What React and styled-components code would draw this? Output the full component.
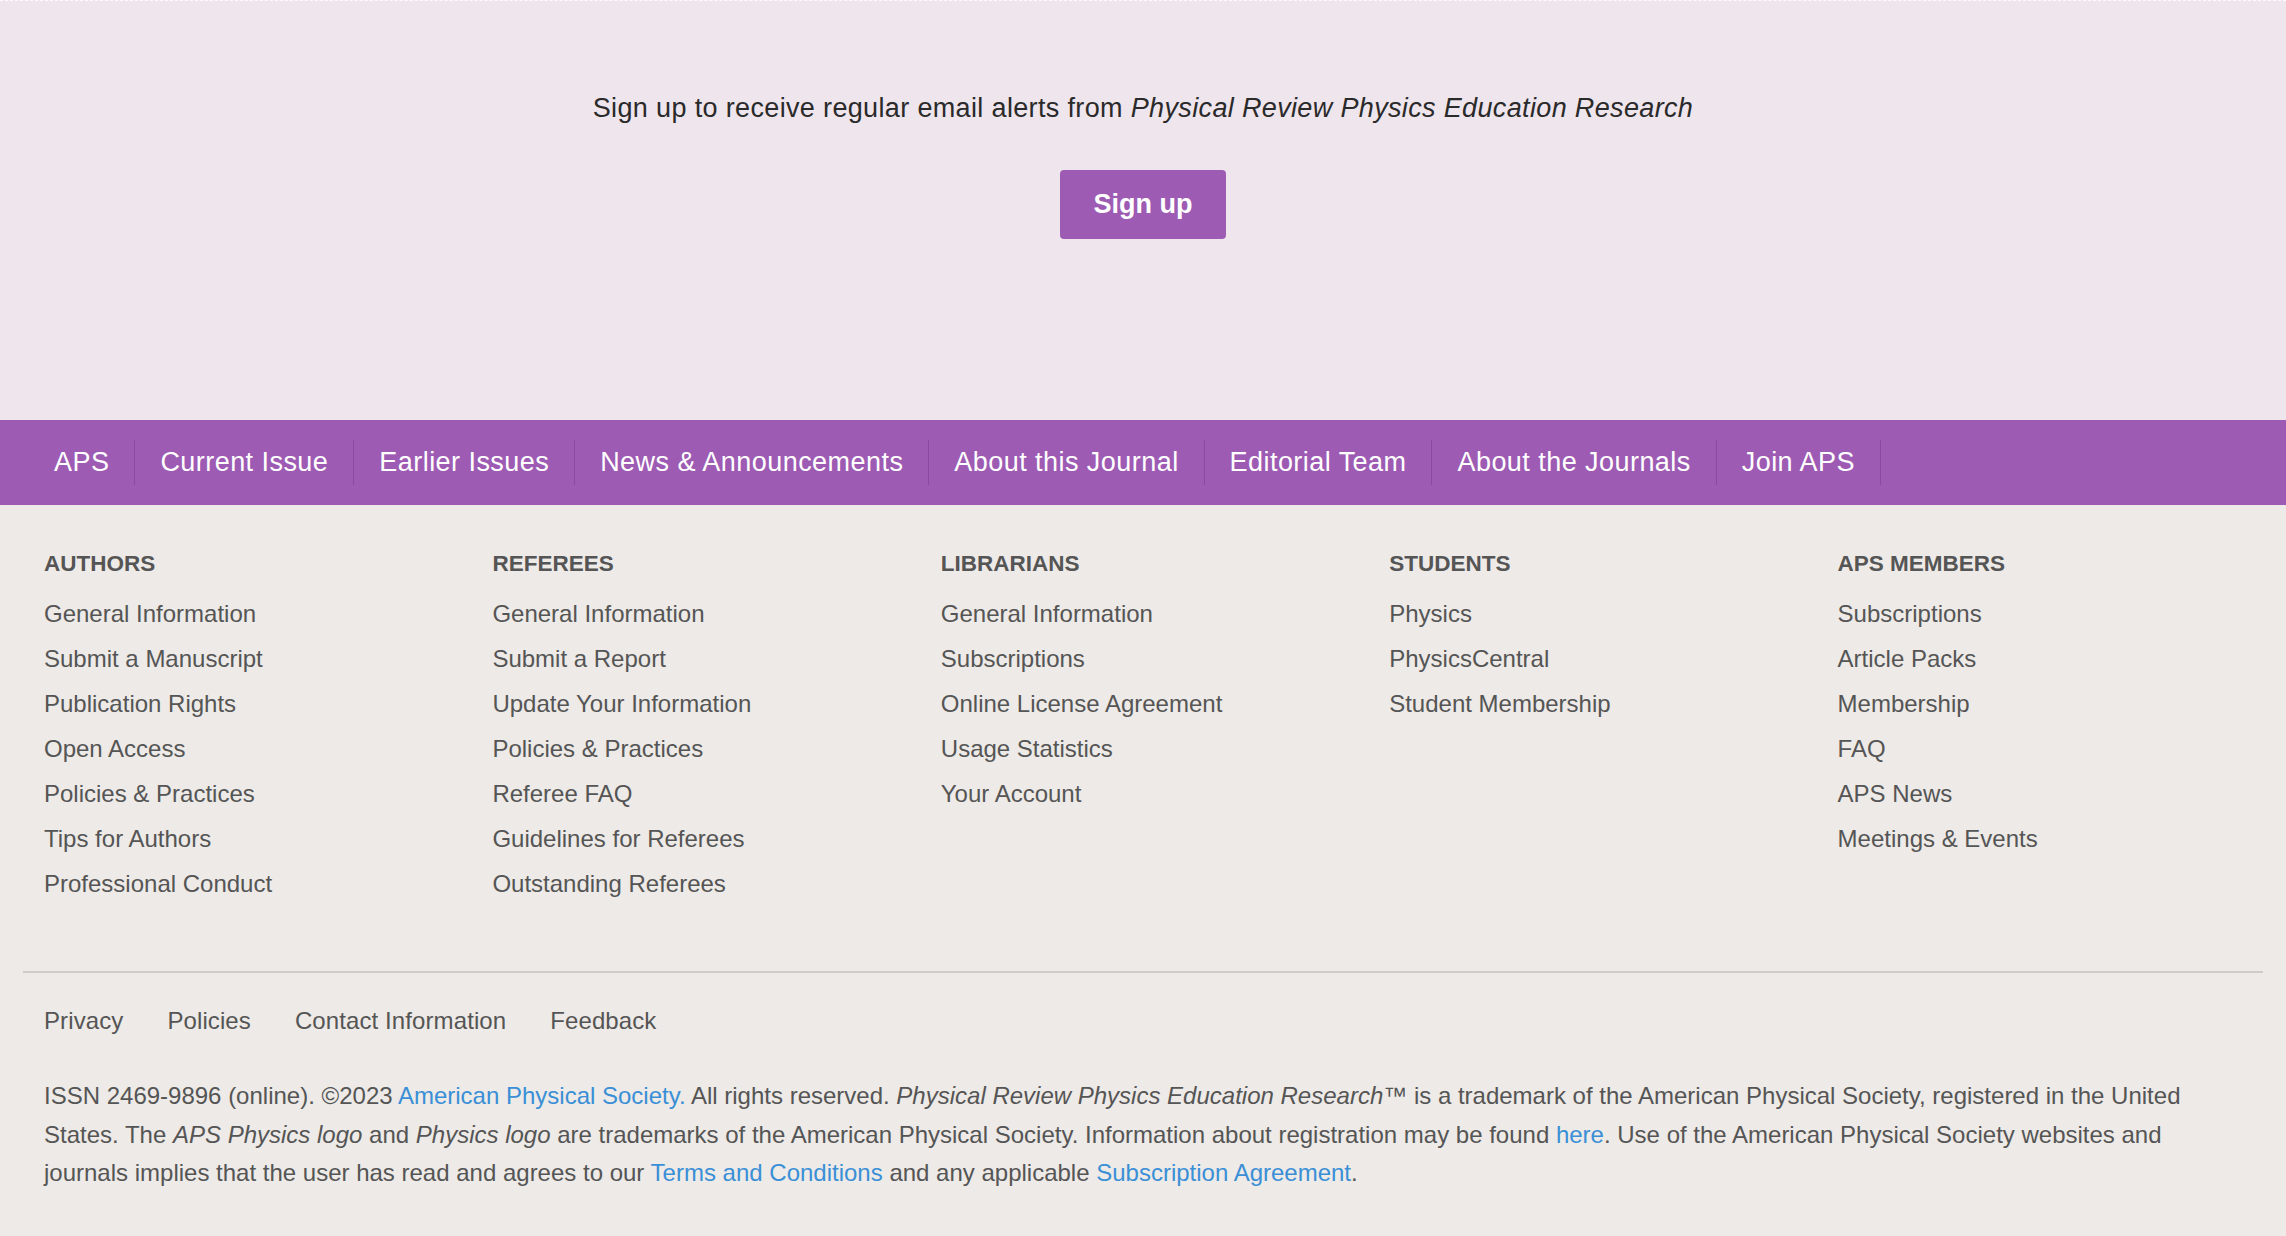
import React from "react";
import styled, { createGlobalStyle } from "styled-components";

const GlobalStyle = createGlobalStyle`
  html, body {
    margin: 0;
    padding: 0;
    background: #edeae7;
  }
  body {
    font-family: "Liberation Sans", Arial, Helvetica, sans-serif;
    -webkit-font-smoothing: antialiased;
  }
  a {
    text-decoration: none;
  }
`;

const colors = {
  alertBg: "#efe5ed",
  purple: "#9d5bb3",
  purpleDark: "#8a4a9f",
  footerBg: "#edeae7",
  text: "#555555",
  dark: "#2a2a2a",
  link: "#3a8fd6",
  rule: "#cfcbc8",
};

const AlertSection = styled.section`
  background: ${colors.alertBg};
  border-top: 1px dashed rgba(255, 255, 255, 0.85);
  padding: 87px 0 181px;
  display: flex;
  flex-direction: column;
  align-items: center;
`;

const AlertText = styled.p`
  margin: 0;
  font-size: 27px;
  line-height: 40px;
  letter-spacing: 0.35px;
  color: ${colors.dark};
`;

const SignUpButton = styled.a`
  margin-top: 42px;
  display: inline-flex;
  align-items: center;
  justify-content: center;
  width: 166px;
  height: 69px;
  border-radius: 4px;
  background: ${colors.purple};
  color: #fff;
  font-size: 27px;
  font-weight: 700;
  cursor: pointer;
`;

const NavBar = styled.nav`
  background: ${colors.purple};
  height: 85px;
  padding: 0 29px;
  display: flex;
  align-items: center;
  box-sizing: border-box;
`;

const NavItem = styled.a`
  display: block;
  height: 45px;
  line-height: 45px;
  padding: 0 25px;
  border-right: 1px solid ${colors.purpleDark};
  color: #fff;
  font-size: 27px;
  letter-spacing: 0.45px;
  white-space: nowrap;
`;

const Footer = styled.footer`
  background: ${colors.footerBg};
  padding: 44px 0 41px;
`;

const Columns = styled.div`
  display: grid;
  grid-template-columns: repeat(5, 1fr);
  padding: 0 22px;
`;

const Column = styled.div`
  padding: 0 22px;
`;

const ColumnTitle = styled.h3`
  margin: 0 0 12px;
  font-size: 22.5px;
  line-height: 30px;
  font-weight: 700;
  color: ${colors.text};
  text-transform: uppercase;
`;

const LinkList = styled.ul`
  list-style: none;
  margin: 0;
  padding: 0;
`;

const LinkItem = styled.li`
  font-size: 24px;
  line-height: 45px;

  a {
    color: ${colors.text};
  }
`;

const Rule = styled.hr`
  margin: 65px 23px 0;
  border: 0;
  height: 2px;
  background: ${colors.rule};
`;

const BottomLinks = styled.div`
  display: flex;
  gap: 44px;
  padding: 30px 44px 0;
`;

const BottomLink = styled.a`
  font-size: 24px;
  line-height: 36px;
  letter-spacing: 0.1px;
  color: ${colors.text};
`;

const Legal = styled.p`
  margin: 38px 0 0;
  padding: 0 82px 0 44px;
  font-size: 24px;
  line-height: 38.5px;
  color: ${colors.text};

  a {
    color: ${colors.link};
  }
`;

const navItems = [
  "APS",
  "Current Issue",
  "Earlier Issues",
  "News & Announcements",
  "About this Journal",
  "Editorial Team",
  "About the Journals",
  "Join APS",
];

const columns = [
  {
    title: "Authors",
    links: [
      "General Information",
      "Submit a Manuscript",
      "Publication Rights",
      "Open Access",
      "Policies & Practices",
      "Tips for Authors",
      "Professional Conduct",
    ],
  },
  {
    title: "Referees",
    links: [
      "General Information",
      "Submit a Report",
      "Update Your Information",
      "Policies & Practices",
      "Referee FAQ",
      "Guidelines for Referees",
      "Outstanding Referees",
    ],
  },
  {
    title: "Librarians",
    links: [
      "General Information",
      "Subscriptions",
      "Online License Agreement",
      "Usage Statistics",
      "Your Account",
    ],
  },
  {
    title: "Students",
    links: ["Physics", "PhysicsCentral", "Student Membership"],
  },
  {
    title: "APS Members",
    links: [
      "Subscriptions",
      "Article Packs",
      "Membership",
      "FAQ",
      "APS News",
      "Meetings & Events",
    ],
  },
];

const bottomLinks = ["Privacy", "Policies", "Contact Information", "Feedback"];

const App = () => {
  return (
    <>
      <GlobalStyle />
      <AlertSection>
        <AlertText>
          Sign up to receive regular email alerts from{" "}
          <em>Physical Review Physics Education Research</em>
        </AlertText>
        <SignUpButton>Sign up</SignUpButton>
      </AlertSection>

      <NavBar>
        {navItems.map(item => (
          <NavItem key={item}>{item}</NavItem>
        ))}
      </NavBar>

      <Footer>
        <Columns>
          {columns.map(col => (
            <Column key={col.title}>
              <ColumnTitle>{col.title}</ColumnTitle>
              <LinkList>
                {col.links.map(link => (
                  <LinkItem key={link}>
                    <a>{link}</a>
                  </LinkItem>
                ))}
              </LinkList>
            </Column>
          ))}
        </Columns>

        <Rule />

        <BottomLinks>
          {bottomLinks.map(link => (
            <BottomLink key={link}>{link}</BottomLink>
          ))}
        </BottomLinks>

        <Legal>
          ISSN 2469-9896 (online). ©2023 <a>American Physical Society.</a> All
          rights reserved. <em>Physical Review Physics Education Research</em>™
          is a trademark of the American Physical Society, registered in the
          United States. The <em>APS Physics logo</em> and <em>Physics logo</em>{" "}
          are trademarks of the American Physical Society. Information about
          registration may be found <a>here</a>. Use of the American Physical
          Society websites and journals implies that the user has read and
          agrees to our <a>Terms and Conditions</a> and any applicable{" "}
          <a>Subscription Agreement</a>.
        </Legal>
      </Footer>
    </>
  );
};

export default App;
